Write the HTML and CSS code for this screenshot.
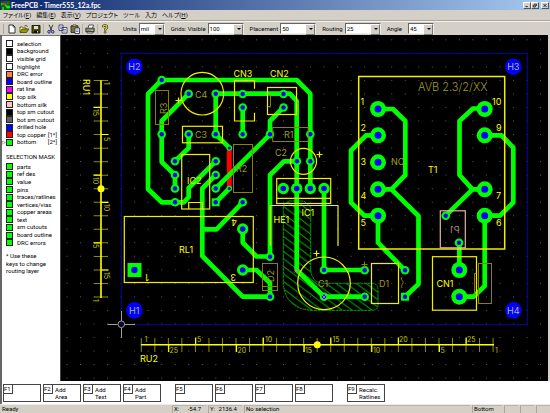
FILE: index.html
```html
<!DOCTYPE html>
<html lang="ja">
<head>
<meta charset="utf-8">
<title>FreePCB - Timer555_12a.fpc</title>
<link rel="stylesheet" href="styles.css">
</head>
<body>
<header class="titlebar">
  <svg class="app-icon" viewBox="0 0 9 9"><rect width="9" height="9" fill="#062"/><path d="M0 3h4l2 3h3M2 9V6" stroke="#0f0" stroke-width="1.4" fill="none"/><circle cx="3" cy="3" r="1.6" fill="#d22"/><circle cx="7" cy="6" r="1.5" fill="#0f0"/><circle cx="7" cy="2" r="1" fill="#d22"/></svg>
  <h1>FreePCB - Timer555_12a.fpc</h1>
  <div class="window-buttons">
    <button aria-label="Minimize"><svg viewBox="0 0 8 7"><path d="M2 5h3" stroke="#000" stroke-width="1.2"/></svg></button>
    <button aria-label="Restore"><svg viewBox="0 0 8 7"><path d="M3 1.5h3v2.5M1.5 3h3v2.6h-3z" stroke="#000" fill="none"/></svg></button>
    <button aria-label="Close" class="close"><svg viewBox="0 0 8 7"><path d="M2 1.5l4 4M6 1.5l-4 4" stroke="#000" stroke-width="1.1"/></svg></button>
  </div>
</header>
<nav class="menubar">
  <button>ファイル(<u>F</u>)</button><button>編集(<u>E</u>)</button><button>表示(<u>V</u>)</button><button>プロジェクト</button><button>ツール</button><button>入力</button><button>ヘルプ(<u>H</u>)</button>
</nav>
<div class="toolbar">
  <div class="tools">
    <button aria-label="New"><svg viewBox="0 0 10 10"><path d="M2 1h4l2 2v6H2z" fill="#fff" stroke="#222" stroke-width=".9"/><path d="M6 1v2h2" fill="none" stroke="#222" stroke-width=".7"/></svg></button>
    <button aria-label="Open"><svg viewBox="0 0 10 10"><path d="M1 8V3h2.500l1 1H7v1" fill="#ff8" stroke="#440" stroke-width=".8"/><path d="M1 8.500l2-3.500h7L7.500 8.500z" fill="#990" stroke="#330" stroke-width=".7"/><path d="M5.500 2q2-1.500 3 .8" fill="none" stroke="#222" stroke-width=".8"/></svg></button>
    <button aria-label="Save"><svg viewBox="0 0 10 10"><path d="M1 1.500h8V9H1z" fill="#550" stroke="#111" stroke-width=".9"/><path d="M3 2h4v3H3z" fill="#ddd"/><path d="M3 6.500h4.500V9H3z" fill="#111"/><path d="M6 7h1v1.500H6z" fill="#ccc"/></svg></button>
    <i></i>
    <button aria-label="Cut"><svg viewBox="0 0 10 10"><path d="M3 .8l3 6M7 .8l-3 6" stroke="#222" stroke-width=".9"/><circle cx="3" cy="7.800" r="1.300" fill="none" stroke="#228"/><circle cx="6.800" cy="7.800" r="1.300" fill="none" stroke="#228"/></svg></button>
    <button aria-label="Copy"><svg viewBox="0 0 10 10"><path d="M1 1h4v5.500H1zM4 3.500h5V9H4z" fill="#fff" stroke="#226" stroke-width=".8"/><path d="M2 3h2M2 4.500h1.500M5 5.500h3M5 7h3" stroke="#226" stroke-width=".6"/></svg></button>
    <button aria-label="Paste"><svg viewBox="0 0 10 10"><path d="M1 1.800h7V8.500H1z" fill="#773" stroke="#222" stroke-width=".8"/><path d="M3 .8h3v1.700H3z" fill="#cc6" stroke="#222" stroke-width=".5"/><path d="M5 4h4.500v5.500H5z" fill="#fff" stroke="#226" stroke-width=".8"/><path d="M6 6h2.500M6 7.500h2.500" stroke="#226" stroke-width=".6"/></svg></button>
    <i></i>
    <button aria-label="Print"><svg viewBox="0 0 10 10"><path d="M3 4l1-3h4.500l-1 3" fill="#fff" stroke="#333" stroke-width=".8"/><path d="M.8 4.200h8.400v3.500H.8z" fill="#888" stroke="#222" stroke-width=".8"/><path d="M2 7.500h6V9H2z" fill="#ddd" stroke="#222" stroke-width=".7"/><path d="M6 6.300h2" stroke="#dd0" stroke-width=".9"/></svg></button>
    <i></i>
    <button aria-label="Help"><svg viewBox="0 0 10 10"><path d="M3 3.300Q3 1.300 5 1.300T7 3.200Q7 4.500 5.200 5.200V6.500" fill="none" stroke="#222" stroke-width="2.300"/><path d="M3 3.300Q3 1.300 5 1.300T7 3.200Q7 4.500 5.200 5.200V6.300" fill="none" stroke="#ee0" stroke-width="1.100"/><circle cx="5.200" cy="8.300" r="1" fill="#cc0" stroke="#222" stroke-width=".6"/></svg></button>
  </div>
  <label class="field">Units<span class="combo short"><select><option>mil</option></select></span></label>
  <label class="field">Grids: Visible<span class="combo"><select><option>100</option></select></span></label>
  <label class="field">Placement<span class="combo"><select><option>50</option></select></span></label>
  <label class="field">Routing<span class="combo"><select><option>25</option></select></span></label>
  <label class="field last">Angle<span class="combo short"><select><option>45</option></select></span></label>
</div>
<main class="workspace">
  <aside class="sidebar">
    <div class="layers">
      <p><b class="sw white"></b>selection</p>
      <p><b class="sw black"></b>background</p>
      <p><b class="sw white"></b>visible grid</p>
      <p><b class="sw white"></b>highlight</p>
      <p><b class="sw orange"></b>DRC error</p>
      <p><b class="sw blue"></b>board outline</p>
      <p><b class="sw magenta"></b>rat line</p>
      <p><b class="sw yellow"></b>top silk</p>
      <p><b class="sw pink"></b>bottom silk</p>
      <p><b class="sw black"></b>top sm cutout</p>
      <p><b class="sw gray"></b>bot sm cutout</p>
      <p><b class="sw blue"></b>drilled hole</p>
      <p><b class="sw red"></b>top copper<span class="key">[1*]</span></p>
      <p class="active"><b class="sw green"></b>bottom<span class="key">[2*]</span></p>
      <p></p>
      <h2>SELECTION MASK</h2>
      <p></p>
      <p><b class="sw green"></b>parts</p>
      <p><b class="sw green"></b>ref des</p>
      <p><b class="sw green"></b>value</p>
      <p><b class="sw green"></b>pins</p>
      <p><b class="sw green"></b>traces/ratlines</p>
      <p><b class="sw green"></b>vertices/vias</p>
      <p><b class="sw green"></b>copper areas</p>
      <p><b class="sw green"></b>text</p>
      <p><b class="sw green"></b>sm cutouts</p>
      <p><b class="sw green"></b>board outline</p>
      <p><b class="sw green"></b>DRC errors</p>
      <p></p>
      <p class="note">* Use these</p>
      <p class="note">keys to change</p>
      <p class="note">routing layer</p>
    </div>
  </aside>
  <svg class="board" viewBox="61 35 487 346" preserveAspectRatio="xMinYMin meet">
    <defs>
      <pattern id="grid" x="66.500" y="39.300" width="13.530" height="13.530" patternUnits="userSpaceOnUse"><rect width="1" height="1" fill="#5c5c5c"/></pattern>
      <pattern id="hatch" width="10" height="7.500" patternUnits="userSpaceOnUse" patternTransform="translate(283 206)"><path d="M-10 -7.500L20 15M-10 0L10 15M0 -7.500L20 7.500" stroke="#00a000" stroke-width="1"/></pattern>
      <g id="pad"><circle r="4.300" fill="#0f0"/><circle r="2.200" fill="#00f"/></g>
      <g id="mid"><circle r="5.700" fill="#0f0"/><circle r="2.800" fill="#00f"/></g>
      <g id="big"><circle r="8" fill="#0f0"/><circle r="3.500" fill="#00f"/></g>
      <g id="sq"><rect x="-4" y="-4" width="8" height="8" fill="#0f0"/><circle r="2.200" fill="#00f"/></g>
      <g id="via"><circle r="2.800" fill="#0f0"/><circle r="1.500" fill="#00f"/></g>
      <g id="plus"><path d="M-3 0H3M0 -3V3"/></g>
    </defs>
    <rect x="61" y="35" width="487" height="346" fill="url(#grid)"/>
    <rect class="outline" x="121.500" y="53.500" width="406" height="271"/>

    <path d="M283.300 205L289 201H304L310.700 207V270Q312 283 324 283.300H373Q378 284 378 290V305Q378 310 373 310.300H310.700Q285 308 283.300 283.300Z" fill="url(#hatch)" stroke="#00a000" stroke-width="1" stroke-dasharray="3 .6"/>

    <path class="jumper" d="M229.300 147.700V188.500"/>
    <g class="trace">
      <path d="M310.300 188.500V93.700L296.700 80H161.700L148 94V189L161.700 202.300H184L188.700 197V188L215.700 161.300"/>
      <path d="M188.700 93.700L161.700 121V162L175 175V188.500"/>
      <path d="M188.700 134.300V148L175 161.300"/>
      <path d="M229.300 147.700L215.700 134.300V93.700H290L296.700 101V270L324 296.700H364.700"/>
      <path d="M229.300 188.500L215.700 202.300"/>
      <path d="M242.700 107.300V134.300"/>
      <path d="M283.300 107.300L270 121V134.300L215.700 188.500"/>
      <path d="M215.700 175L202.300 188.500V256L242.700 296.700H270"/>
      <path d="M202.300 229.300H216.500L242.700 202.300"/>
      <path d="M296.700 161.300H284L270 175V256.500H256.500L242.700 242.500V229"/>
      <path d="M242.700 270H256.500L270 283V296.700"/>
      <path d="M324 188.500V270H364.700"/>
      <path d="M378 109H393L405.300 121V175L391.500 189.300H378M391.500 189.300L418.500 216V284L405 296.700"/>
      <path d="M378 135.300H366L351 150.500V202.500L364.500 215.700H378V242.700L405 270.300"/>
      <path d="M484.700 108.500H473L459.500 121V175L472.500 189.300H484.700M472.500 189.300L445.700 215.700"/>
      <path d="M484.700 135.300H501.500L513.300 147.700V202.500L500 215.700H484.700V286L473.500 296.700H459.300"/>
      <path d="M459.300 242.700V270"/>
    </g>
    <g>
      <use href="#pad" x="161.700" y="80"/><use href="#pad" x="188.700" y="93.700"/><use href="#pad" x="215.700" y="93.700"/>
      <use href="#pad" x="161.700" y="134.300"/><use href="#pad" x="188.700" y="134.300"/><use href="#pad" x="215.700" y="134.300"/>
      <use href="#pad" x="175" y="161.300"/><use href="#pad" x="175" y="175"/><use href="#pad" x="175" y="188.500"/><use href="#pad" x="175" y="202.300"/>
      <use href="#pad" x="215.700" y="161.300"/><use href="#pad" x="215.700" y="175"/><use href="#pad" x="215.700" y="188.500"/><use href="#sq" x="215.700" y="202.300"/>
      <use href="#via" x="229.300" y="148"/><use href="#via" x="229.300" y="188.500"/>
      <use href="#pad" x="242.700" y="94"/><use href="#pad" x="242.700" y="107.500"/><use href="#pad" x="242.700" y="134.300"/>
      <use href="#pad" x="283.500" y="94"/><use href="#pad" x="283.500" y="107.500"/>
      <use href="#pad" x="270" y="134.300"/><use href="#pad" x="310.300" y="134.300"/>
      <use href="#pad" x="296.900" y="161.300"/><use href="#pad" x="310.300" y="161.300"/>
      <use href="#mid" x="283.300" y="188.500"/><use href="#mid" x="296.700" y="188.500"/><use href="#mid" x="310.300" y="188.500"/><use href="#mid" x="324" y="188.500"/>
      <use href="#pad" x="242.700" y="202.300"/><use href="#mid" x="242.700" y="229"/><use href="#mid" x="242.700" y="270"/>
      <use href="#pad" x="270" y="256.700"/><use href="#pad" x="270" y="296.700"/>
      <use href="#pad" x="324" y="270"/><use href="#pad" x="324" y="296.700"/><use href="#pad" x="364.700" y="270.300"/><use href="#pad" x="364.700" y="296.700"/>
      <use href="#pad" x="405" y="270.300"/><use href="#sq" x="405" y="296.700"/>
      <rect x="127.500" y="263" width="14" height="14" fill="#0f0"/><circle cx="134.400" cy="270" r="3.200" fill="#00f"/>
      <use href="#big" x="378" y="109"/><use href="#big" x="378" y="135.300"/><use href="#big" x="378" y="162.300"/><use href="#big" x="378" y="189.300"/><use href="#big" x="378" y="215.700"/>
      <use href="#big" x="484.700" y="109"/><use href="#big" x="484.700" y="135.300"/><use href="#big" x="484.700" y="189.300"/><use href="#big" x="484.700" y="215.700"/>
      <use href="#big" x="459.300" y="270"/><use href="#big" x="459.300" y="296.700"/>
      <use href="#pad" x="445.700" y="215.700"/><use href="#pad" x="459" y="242.700"/>
      <path d="M294.500 268l4.500 4.500M299 268l-4.500 4.500M321 294l6 6M327 294l-6 6" stroke="#b8a" stroke-width=".9"/>
    </g>

    <g class="silk dim">
      <rect x="155.500" y="90.500" width="13" height="34"/><rect x="233.500" y="144.500" width="19" height="48"/>
      <rect x="272.700" y="127.500" width="35.500" height="14"/><rect x="262.500" y="263.500" width="15" height="27"/><path d="M262.500 286.500h15"/>
      <rect x="478.500" y="263.500" width="13" height="40"/><path d="M476.500 273.500h-2v21h2M267.500 95.500h3v11h-3"/>
      <use href="#plus" x="364.500" y="264.500"/><path d="M402 277c-2 3 2 4 1 6s-2 3-1 5"/>
    </g>
    <g class="silk">
      <circle cx="202.300" cy="93.700" r="21.300"/><rect x="182.500" y="126.300" width="40" height="16.500"/>
      <path d="M254.500 88.700V80.700H234.500V121H254.500V112.700"/><rect x="267.500" y="87.500" width="29" height="27"/>
      <circle cx="303.500" cy="161.300" r="13"/><rect x="181.700" y="154.500" width="28" height="54.500"/><path d="M188.700 209v-6.500h13.600v6.500"/>
      <rect x="276.700" y="178.500" width="54" height="25"/><path d="M276.700 198.300h54M270.300 245.700V205.500H338V246"/>
      <rect x="124.300" y="216.500" width="129" height="66"/><circle cx="324" cy="283.300" r="26.300"/>
      <rect x="371.500" y="263.500" width="27" height="40"/><rect x="432.500" y="256.700" width="44" height="53.500"/>
      <use href="#plus" x="178.500" y="100.500"/><use href="#plus" x="319.500" y="154.500"/><use href="#plus" x="316.500" y="253.500"/>
      <rect x="358.700" y="76.500" width="146" height="172.500" stroke-width="1.500"/>
    </g>
    <rect x="440.300" y="210.800" width="25" height="37" fill="none" stroke="#e8b0b0" stroke-width="1.200"/>

    <g fill="#00f"><circle cx="134.300" cy="66.700" r="8.300"/><circle cx="513.300" cy="66.700" r="8.300"/><circle cx="134.300" cy="310.300" r="8.300"/><circle cx="513.300" cy="310.300" r="8.300"/></g>
    <g class="hole-name"><text x="134.300" y="70">H2</text><text x="513.300" y="70">H3</text><text x="134.300" y="314">H1</text><text x="513.300" y="314">H4</text></g>
    <g class="name faint">
      <text x="195" y="97.500">C4</text><text x="195" y="137.500">C3</text><text x="284" y="137.500">R1</text><text x="275" y="155.500">C2</text><text x="236" y="172">R2</text>
      <text transform="translate(166.500 114)rotate(-90)">R3</text><text transform="translate(274 282)rotate(-90)">D2</text>
      <text x="318" y="287">C1</text><text x="379" y="287">D1</text><text x="391" y="165">NC</text><text class="large" x="418" y="91">AVB 2.3/2/XX</text>
    </g>
    <g class="name">
      <text x="187" y="184">IC2</text><text x="233.500" y="77">CN3</text><text x="270" y="77">CN2</text><text x="179" y="253">RL1</text>
      <text x="273.500" y="223">HE1</text><text x="301.500" y="216">IC1</text><text x="436.500" y="287">CN1</text><text x="428" y="173">T1</text>
      <text transform="translate(149 274)rotate(180)">1</text><text transform="translate(237 219)rotate(180)">4</text><text transform="translate(236 273.500)rotate(180)">3</text>
      <text x="360.500" y="104.500">1</text><text x="360.500" y="131">2</text><text x="360.500" y="165">3</text><text x="360.500" y="199">4</text><text x="360.500" y="226">5</text>
      <text x="492" y="105">10</text><text x="496" y="131">9</text><text x="496" y="199">7</text><text x="496" y="226">6</text>
      <text x="140" y="362">RU2</text><text transform="translate(83 79)rotate(90)">RU1</text>
    </g>
    <text class="mirrored" transform="translate(459.500 233)scale(-1 1)">P1</text>

    <g class="ruler">
      <path class="ticks" d="M140.800 345H494.500M101 80V298.500"/>
      <path class="major" d="M195.700 337.500V345M263.300 337.500V345M330.800 337.500V345M398.400 337.500V345M466.200 337.500V345M168.700 345V352M236.500 345V352M304.200 345V352M371.800 345V352M439.400 345V352M93.500 107.400H101M93.500 175.200H101M93.500 242.800H101M101 134.500H108.500M101 202.300H108.500M101 270H108.500"/>
      <path class="spine" d="M141 344.700H494M101 80.300V298"/>
      <circle cx="317.300" cy="344.700" r="3.500"/><circle cx="101" cy="188.700" r="3.500"/>
      <g class="scale">
        <text x="144.500" y="342">1</text><text x="197" y="342">5</text><text x="265" y="342">10</text><text x="332.500" y="342">15</text><text x="399" y="342">20</text><text x="467" y="342">25</text>
        <text x="169.500" y="353">25</text><text x="237.500" y="353">20</text><text x="305" y="353">15</text><text x="373" y="353">10</text><text x="440.500" y="353">5</text><text x="495" y="353">1</text>
        <text transform="translate(103.500 82)rotate(90)">1</text><text transform="translate(103.500 137)rotate(90)">5</text><text transform="translate(103.500 204)rotate(90)">10</text><text transform="translate(103.500 272)rotate(90)">15</text>
        <text transform="translate(92.500 109)rotate(90)">15</text><text transform="translate(92.500 177)rotate(90)">10</text><text transform="translate(92.500 244)rotate(90)">5</text><text transform="translate(92.500 299)rotate(90)">1</text>
      </g>
    </g>
    <path d="M107.500 324.500H117.500M124.500 324.500H135M121.500 311V321M121.500 328V338" stroke="#a0a0a0"/>
    <circle cx="121.300" cy="324.300" r="3.300" fill="none" stroke="#a0a0a0"/>
  </svg>
</main>
<div class="fkeys">
  <button><kbd>F1</kbd></button><button><kbd>F2</kbd><span>Add<br>Area</span></button><button><kbd>F3</kbd><span>Add<br>Text</span></button><button><kbd>F4</kbd><span>Add<br>Part</span></button>
  <button class="group"><kbd>F5</kbd></button><button><kbd>F6</kbd></button><button><kbd>F7</kbd></button><button><kbd>F8</kbd></button>
  <button class="group"><kbd>F9</kbd><span>Recalc.<br>Ratlines</span></button>
</div>
<footer class="status">
  <span class="ready">Ready</span><span class="coord">X:<em>-54.7</em></span><span class="coord">Y:<em>2136.4</em></span><span class="message">No selection</span><span class="layer">Bottom</span><span class="cell"></span><span class="cell"></span><span class="cell"></span>
</footer>
</body>
</html>
```
FILE: styles.css
```css
* { box-sizing: border-box; margin: 0; padding: 0; }
html, body { height: 100%; }
body {
  display: flex;
  flex-direction: column;
  overflow: hidden;
  background: #d4d0c8;
  color: #000;
  font: 6px/8px Roboto, "Noto Sans CJK JP", sans-serif;
}
button, select { font: inherit; color: inherit; border: 0; background: none; }
svg { display: block; }

.titlebar {
  display: flex;
  align-items: center;
  flex: none;
  height: 10px;
  padding: 0 1px;
  background: linear-gradient(90deg, #0a246a, #a6caf0);
  color: #fff;
}
.titlebar h1 { flex: 1; padding-left: 1px; font: bold 7px/10px Lato, sans-serif; }
.app-icon { width: 9px; height: 9px; }
.window-buttons { display: flex; }
.window-buttons button {
  width: 8px;
  height: 7px;
  background: #d4d0c8;
  border: 1px solid;
  border-color: #fff #555 #555 #fff;
}
.window-buttons .close { margin-left: 2px; }
.window-buttons svg { width: 100%; height: 100%; overflow: visible; }

.menubar {
  display: flex;
  gap: 5px;
  flex: none;
  height: 11px;
  padding: 0 3px;
  border-bottom: 1px solid #aaa69e;
}
.menubar button { line-height: 10px; font-feature-settings: "palt"; white-space: nowrap; }

.toolbar {
  display: flex;
  align-items: center;
  flex: none;
  height: 14px;
  padding-left: 3px;
  border-top: 1px solid #f4f2ee;
}
.tools { display: flex; align-items: center; margin-right: 12px; padding-left: 2px; border-left: 1px solid #aaa69e; }
.tools button { width: 12px; height: 10px; }
.tools svg { width: 10px; height: 10px; margin: 0 auto; }
.tools i { width: 1px; height: 10px; margin: 0 1px; background: #b4b0a8; }
.field { display: flex; align-items: center; gap: 2px; margin-right: 6px; white-space: nowrap; }
.field.last { gap: 6px; }
.combo { position: relative; width: 36px; height: 11px; border: 1px solid; border-color: #666 #eee #eee #666; background: #fff; }
.combo.short { width: 26px; }
.combo select { display: block; width: 100%; height: 9px; padding-left: 1px; appearance: none; line-height: 9px; }
.combo::before { content: ""; position: absolute; right: 0; top: 0; width: 8px; height: 9px; background: #d4d0c8; border: 1px solid; border-color: #fff #777 #777 #fff; pointer-events: none; }
.combo::after { content: ""; position: absolute; right: 2px; top: 4px; border: 2px solid transparent; border-top-color: #000; border-bottom: 0; pointer-events: none; }

.workspace { display: flex; flex: 1; min-height: 0; padding-right: 2px; border-left: 2px solid #666; }
.sidebar { flex: none; width: 59px; padding-top: 4px; background: #fff; border-right: 1px solid #444; border-top: 1px solid #777; }
.layers {
  display: grid;
  grid-template-rows: repeat(14, 10fr) 9fr 10fr 3fr repeat(11, 10fr) 8fr repeat(3, 10fr);
  height: 69%;
  padding-left: 4px;
}
.layers p, .layers h2 { position: relative; display: flex; align-items: center; min-height: 0; font-size: 6px; font-weight: normal; white-space: nowrap; line-height: 1; }
.sw { flex: none; width: 7px; height: 7px; margin-right: 4px; border: 1px solid #222; }
.white { background: #fff; }
.black { background: #000; }
.orange { background: #ff8040; }
.blue { background: #00f; }
.magenta { background: #f0f; }
.yellow { background: #ff0; }
.pink { background: #ffc0c0; }
.gray { background: #606060; }
.red { background: #f00; }
.green { background: #0f0; }
.key { margin-left: auto; padding-right: 3px; }
.active::before { content: "▷"; position: absolute; left: -4px; font: 5px/7px "DejaVu Sans", sans-serif; }

.board { flex: 1; min-width: 0; height: 100%; background: #000; }
.outline { fill: none; stroke: #0000a8; }
.trace { fill: none; stroke: #0f0; stroke-width: 4.700; stroke-linejoin: round; stroke-linecap: round; }
.jumper { fill: none; stroke: #f00; stroke-width: 5; }
.silk { fill: none; stroke: #f0f000; stroke-width: 1.200; }
.silk.dim { stroke: #8c8000; stroke-width: 1; }
.name { fill: #ff0; font: 9px Inter, sans-serif; }
.name.faint { fill: #a09a20; }
.name .large { font-size: 11px; font-weight: 300; }
.hole-name { fill: #b4b4a0; font: 9px Inter, sans-serif; text-anchor: middle; }
.mirrored { fill: #b08888; font: 9px Inter, sans-serif; }
.ruler { fill: #ff0; }
.ticks { stroke: #8c8c00; stroke-width: 14; stroke-dasharray: 1 12.530; fill: none; }
.major { stroke: #ff0; stroke-width: 1.200; }
.spine { stroke: #ff0; stroke-width: 1.600; }
.scale { fill: #c0c000; font: 7px Inter, sans-serif; }

.fkeys { display: flex; gap: 2px; flex: none; padding: 3px 1px 2px; background: #fff; border-left: 2px solid #666; }
.fkeys button { display: flex; gap: 2px; width: 38px; height: 18px; border: 1px solid #444; text-align: left; line-height: 7px; }
.fkeys .group { margin-left: 12px; }
.fkeys kbd { width: 9px; height: 9px; font: inherit; line-height: 8px; border: solid #444; border-width: 0 1px 1px 0; }
.fkeys span { padding-top: 1px; }

.status { display: flex; gap: 2px; flex: none; height: 9px; border-top: 1px solid #eceae4; }
.status span { padding-left: 1px; white-space: nowrap; border-left: 1px solid #aaa69e; border-top: 1px solid #b8b4ac; line-height: 6px; }
.status .ready { width: 170px; border-color: transparent; }
.status .coord { display: flex; justify-content: space-between; width: 34px; padding-right: 5px; }
.status em { font-style: normal; }
.status .message { flex: 1; }
.status .layer { width: 30px; }
.status .cell { width: 14px; }
```
